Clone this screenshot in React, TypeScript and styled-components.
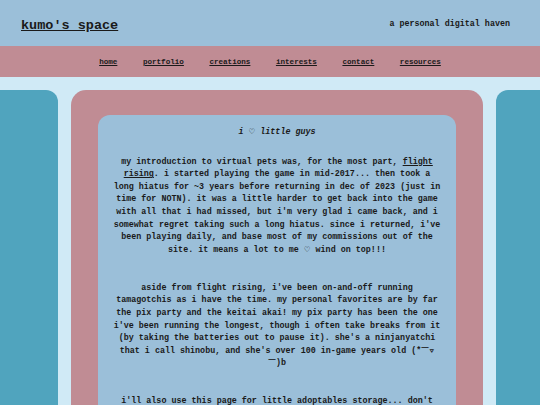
import React from "react";
import styled, { createGlobalStyle } from "styled-components";

const Global = createGlobalStyle`
  html, body { margin: 0; padding: 0; }
  body {
    background: #d0eaf6;
    font-family: "Courier New", Courier, "Nimbus Mono PS", "FreeMono", "Liberation Mono", monospace;
    color: #1a1a1a;
    overflow: hidden;
  }
`;

const Page = styled.div`
  width: 540px;
  min-height: 405px;
`;

const Header = styled.header`
  height: 46px;
  background: #9bbfd9;
  display: flex;
  align-items: center;
  justify-content: space-between;
  padding: 0 30px 0 21px;
  box-sizing: border-box;
`;

const SiteTitle = styled.a`
  font-size: 13.5px;
  font-weight: bold;
  color: #1a1a1a;
  text-decoration: underline;
  margin-top: 5px;
`;

const Tagline = styled.span`
  font-size: 8.4px;
  font-weight: bold;
  margin-top: 1px;
`;

const Nav = styled.nav`
  height: 31px;
  background: #c08c94;
  display: flex;
  align-items: center;
  justify-content: center;
  gap: 25.5px;
`;

const NavLink = styled.a`
  font-size: 7.6px;
  font-weight: bold;
  color: #1a1a1a;
  text-decoration: underline;
`;

const Layout = styled.div`
  display: grid;
  grid-template-columns: 58px 412px 1fr;
  column-gap: 13px;
  padding-top: 13px;
`;

const Side = styled.aside<{ $side: "left" | "right" }>`
  background: #50a4be;
  min-height: 400px;
  border-radius: ${(p) => (p.$side === "left" ? "0 12px 0 0" : "12px 0 0 0")};
`;

const Main = styled.main`
  background: #c08c94;
  border-radius: 15px;
  padding: 25px 27px 25px 27px;
`;

const Inner = styled.section`
  background: #9bbfd9;
  border-radius: 12px;
  padding: 11px 14px 20px;
  text-align: center;
`;

const Heading = styled.h2`
  font-size: 8.4px;
  line-height: 12.6px;
  font-style: italic;
  font-weight: bold;
  margin: 0 0 17px;
`;

const Heart = styled.span`
  font-family: "DejaVu Sans", sans-serif;
  font-style: normal;
  font-weight: bold;
  font-size: 0.9em;
`;

const Para = styled.p`
  font-size: 8.4px;
  line-height: 12.6px;
  font-weight: bold;
  margin: 0 0 25.4px;
`;

const InlineLink = styled.a`
  color: #1a1a1a;
  text-decoration: underline;
`;

export default function App() {
  const links = ["home", "portfolio", "creations", "interests", "contact", "resources"];
  return (
    <Page>
      <Global />
      <Header>
        <SiteTitle href="#">kumo's space</SiteTitle>
        <Tagline>a personal digital haven</Tagline>
      </Header>
      <Nav>
        {links.map((l) => (
          <NavLink key={l} href="#">
            {l}
          </NavLink>
        ))}
      </Nav>
      <Layout>
        <Side $side="left" />
        <Main>
          <Inner>
            <Heading>
              i <Heart>♡</Heart> little guys
            </Heading>
            <Para>
              my introduction to virtual pets was, for the most part,{" "}
              <InlineLink href="#">flight rising</InlineLink>. i started playing the game in
              mid-2017... then took a long hiatus for ~3 years before returning in dec of 2023
              (just in time for NOTN). it was a little harder to get back into the game with all
              that i had missed, but i'm very glad i came back, and i somewhat regret taking such
              a long hiatus. since i returned, i've been playing daily, and base most of my
              commissions out of the site. it means a lot to me <Heart>♡</Heart> wind on top!!!
            </Para>
            <Para>
              aside from flight rising, i've been on-and-off running tamagotchis as i have the
              time. my personal favorites are by far the pix party and the keitai akai! my pix
              party has been the one i've been running the longest, though i often take breaks
              from it (by taking the batteries out to pause it). she's a ninjanyatchi that i call
              shinobu, and she's over 100 in-game years old (*￣▽￣)b
            </Para>
            <Para>
              i'll also use this page for little adoptables storage... don't mind me!
            </Para>
          </Inner>
        </Main>
        <Side $side="right" />
      </Layout>
    </Page>
  );
}
